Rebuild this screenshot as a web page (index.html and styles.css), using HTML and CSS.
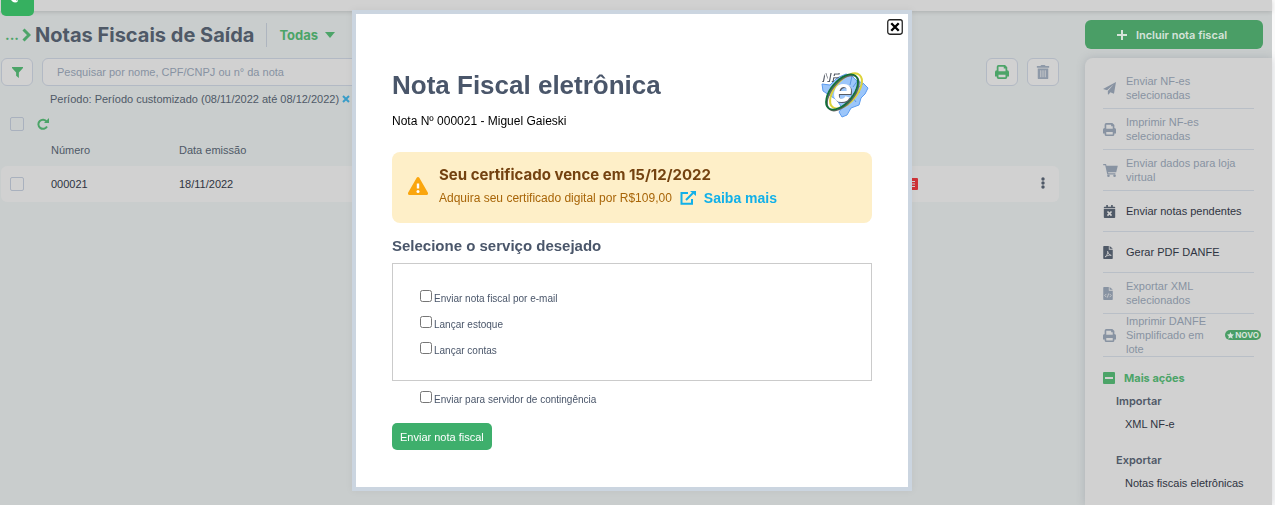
FILE: index.html
```html
<!DOCTYPE html>
<html lang="pt-BR">
<head>
    <meta charset="UTF-8">
    <meta name="viewport" content="width=device-width, initial-scale=1.0">
    <title>Notas Fiscais de Saída</title>
    <link rel="stylesheet" href="styles.css">
</head>
<body>
    <!-- shared icons -->
    <svg class="sprite" aria-hidden="true">
        <symbol id="icon-print" viewBox="0 0 16 16">
            <path fill-rule="evenodd" d="M2 6V2a2 2 0 0 1 2-2h7.500L14 2.500V6a2 2 0 0 1 2 2v5h-2v1a2 2 0 0 1-2 2H4a2 2 0 0 1-2-2v-1H0V8a2 2 0 0 1 2-2zM4 2v5h8V4h-2V2zM4 11v3h8v-3z"/>
        </symbol>
        <symbol id="icon-file" viewBox="0 0 12 16">
            <path d="M1 0h6v4.500h5V15a1 1 0 0 1-1 1H1a1 1 0 0 1-1-1V1a1 1 0 0 1 1-1z"/>
            <path d="M8 0l4 3.500H8z"/>
        </symbol>
    </svg>

    <header class="topbar">
        <a class="logo" href="#" aria-label="Início">
            <svg viewBox="0 0 33 16"><path d="M10 0h5q0 1 2 0v1q-1 1.500-3 1.500T10 0z" fill="#fff"/></svg>
        </a>
    </header>

    <div class="page">
        <main class="content">
            <div class="title-row">
                <a class="crumb" href="#">...</a>
                <svg class="chevron" viewBox="0 0 9 14"><path d="M1.500 1.500L7 7l-5.500 5.500" fill="none" stroke="#4ca468" stroke-width="3"/></svg>
                <h1>Notas Fiscais de Saída</h1>
                <button class="view" type="button">Todas <svg viewBox="0 0 10 6"><path d="M0 0h10L5 6z"/></svg></button>
            </div>

            <div class="tools">
                <button class="tool" type="button" aria-label="Filtrar">
                    <svg class="icon" viewBox="0 0 12 12"><path d="M0 0h12v1L7.500 6v6L4.500 9.500V6L0 1z"/></svg>
                </button>
                <input class="search" type="text" aria-label="Pesquisar" placeholder="Pesquisar por nome, CPF/CNPJ ou n° da nota">
                <div class="tool-actions">
                    <button class="tool" type="button" aria-label="Imprimir">
                        <svg class="icon icon-lg"><use href="#icon-print"/></svg>
                    </button>
                    <button class="tool tool-muted" type="button" aria-label="Excluir">
                        <svg class="icon icon-lg" viewBox="0 0 14 16"><path fill-rule="evenodd" d="M5 0h4l1 1h4v2H0V1h4zM1 4h12v11a1 1 0 0 1-1 1H2a1 1 0 0 1-1-1zM4 6v8h1V6zM6.500 6v8h1V6zM9 6v8h1V6z"/></svg>
                    </button>
                </div>
            </div>

            <div class="period">
                Período: Período customizado (08/11/2022 até 08/12/2022)
                <button type="button" aria-label="Remover período"><svg viewBox="0 0 8 8"><path d="M1 1l6 6M7 1L1 7" stroke="#3a9dc8" stroke-width="2"/></svg></button>
            </div>

            <div class="select-row">
                <input type="checkbox" class="check" aria-label="Selecionar todas">
                <button type="button" aria-label="Atualizar">
                    <svg viewBox="0 0 12 12"><path d="M9.700 3.500A4.600 4.600 0 1 0 10 8.500" fill="none" stroke="#4ca468" stroke-width="2"/><path d="M12 0v5H7z" fill="#4ca468"/></svg>
                </button>
            </div>

            <table class="notes">
                <thead>
                    <tr>
                        <th class="col-check"></th>
                        <th class="col-number">Número</th>
                        <th>Data emissão</th>
                        <th class="col-flag"></th>
                        <th class="col-menu"></th>
                    </tr>
                </thead>
                <tbody>
                    <tr>
                        <td><input type="checkbox" class="check" aria-label="Selecionar nota 000021"></td>
                        <td>000021</td>
                        <td>18/11/2022</td>
                        <td><svg class="flag" viewBox="0 0 11 12"><rect width="11" height="12" rx="1" fill="#cf3338"/><path d="M4 3.500h4M4 6h4M4 8.500h4" stroke="#d1d1d1"/></svg></td>
                        <td>
                            <button type="button" aria-label="Opções">
                                <svg viewBox="0 0 4 12"><circle cx="2" cy="2" r="1.700"/><circle cx="2" cy="6" r="1.700"/><circle cx="2" cy="10" r="1.700"/></svg>
                            </button>
                        </td>
                    </tr>
                </tbody>
            </table>
        </main>

        <aside class="sidebar">
            <button class="add" type="button">
                <svg viewBox="0 0 10 10"><path d="M5 0v10M0 5h10" stroke="#d6e3da" stroke-width="2"/></svg>
                Incluir nota fiscal
            </button>
            <nav class="card">
                <ul class="menu">
                    <li class="disabled">
                        <svg viewBox="0 0 16 16"><path d="M16 0l-2.500 14.500-4.500-2L7 15.500 6 15v-4l7-8-8 7L0 8.500z"/></svg>
                        <a href="#">Enviar NF-es selecionadas</a>
                    </li>
                    <li class="disabled">
                        <svg><use href="#icon-print"/></svg>
                        <a href="#">Imprimir NF-es selecionadas</a>
                    </li>
                    <li class="disabled">
                        <svg class="wide" viewBox="0 0 18 16"><path d="M0 0h3.500L4 2h14l-2 8H6l.3 1.500H15V13H5L2.500 1.500H0z"/><circle cx="6.500" cy="14.400" r="1.600"/><circle cx="14" cy="14.400" r="1.600"/></svg>
                        <a href="#">Enviar dados para loja virtual</a>
                    </li>
                    <li>
                        <svg viewBox="0 0 14 16"><path fill-rule="evenodd" d="M3 0h2v2h4V0h2v2h2a1 1 0 0 1 1 1v1H0V3a1 1 0 0 1 1-1h2zM0 5h14v10a1 1 0 0 1-1 1H1a1 1 0 0 1-1-1z"/><path d="M4.500 8l5 5M9.500 8l-5 5" stroke="#d1d1d1" stroke-width="2"/></svg>
                        <a href="#">Enviar notas pendentes</a>
                    </li>
                    <li>
                        <svg class="file" viewBox="0 0 12 16"><use href="#icon-file"/><path d="M2.500 13.500C5 11 6 9 5.500 6.500c1 3 2 4.500 4.500 5-3-.5-5 0-7.500 2z" fill="none" stroke="#d1d1d1"/></svg>
                        <a href="#">Gerar PDF DANFE</a>
                    </li>
                    <li class="disabled">
                        <svg class="file" viewBox="0 0 12 16"><use href="#icon-file"/><path d="M4 8.500L2 10.500l2 2M8 8.500l2 2-2 2M6.800 8l-1.600 5" fill="none" stroke="#d1d1d1"/></svg>
                        <a href="#">Exportar XML selecionados</a>
                    </li>
                    <li class="disabled">
                        <svg><use href="#icon-print"/></svg>
                        <a href="#" class="short">Imprimir DANFE Simplificado em lote</a>
                        <span class="badge"><svg viewBox="0 0 10 10"><path d="M5 0l1.500 3.300 3.500.4-2.600 2.400.7 3.600L5 8 1.900 9.700l.7-3.600L0 3.700l3.500-.4z"/></svg>NOVO</span>
                    </li>
                </ul>
                <button class="more" type="button">
                    <svg viewBox="0 0 12 12"><rect width="12" height="12" rx="1"/><path d="M2 6h8" stroke="#d1d1d1" stroke-width="2"/></svg>
                    Mais ações
                </button>
                <section class="group">
                    <h2>Importar</h2>
                    <a href="#">XML NF-e</a>
                </section>
                <section class="group">
                    <h2>Exportar</h2>
                    <a href="#">Notas fiscais eletrônicas</a>
                </section>
            </nav>
        </aside>
    </div>

    <div class="overlay">
        <div class="modal" role="dialog" aria-labelledby="modal-title">
            <button class="close" type="button" aria-label="Fechar">
                <svg viewBox="0 0 15 15"><rect x=".7" y=".7" width="13.600" height="13.600" rx="2" fill="#fff" stroke="#222" stroke-width="1.200"/><path d="M4 4l7 7M11 4l-7 7" stroke="#000" stroke-width="2.200"/></svg>
            </button>
            <div class="modal-head">
                <div>
                    <h2 id="modal-title">Nota Fiscal eletrônica</h2>
                    <p>Nota Nº 000021 - Miguel Gaieski</p>
                </div>
                <svg class="nfe" viewBox="0 0 48 48" role="img" aria-label="NF-e">
                    <path d="M1 14l8 1 7-7 9-4 6 2 5 5 6 2 5 5-3 6-4 4-2 7-8 3-4 7-5 2-3-5 3-4-5-8-8-5-6-4z" fill="#9cc6fa" stroke="#5c9cf0"/>
                    <path d="M31 6l-2 9M37 10l-5 7M42 14l-8 6M39 22l-7 2M35 32l-5-7M27 36l-3-5" stroke="#5b96e2" fill="none"/>
                    <ellipse cx="25" cy="21" rx="11" ry="21" transform="rotate(40 25 21)" fill="none" stroke="#ddd33a" stroke-width="2"/>
                    <ellipse cx="22" cy="23" rx="11" ry="21" transform="rotate(40 22 23)" fill="none" stroke="#666" stroke-width="1.500"/>
                    <ellipse cx="21" cy="22" rx="11" ry="21" transform="rotate(40 21 22)" fill="none" stroke="#12703a" stroke-width="1.800"/>
                    <text x="12" y="32" class="nfe-e">e</text>
                    <text x="0" y="11" class="nfe-nf">NF</text>
                </svg>
            </div>

            <div class="alert">
                <svg class="warning" viewBox="0 0 20 18"><path d="M8.700.8a1.500 1.500 0 0 1 2.600 0l8.500 14.800A1.500 1.500 0 0 1 18.500 18h-17A1.500 1.500 0 0 1 .2 15.600z" fill="#faa60f"/><path d="M10 6.500v5" stroke="#fff" stroke-width="2.400"/><circle cx="10" cy="14.500" r="1.500" fill="#fff"/></svg>
                <div>
                    <strong>Seu certificado vence em 15/12/2022</strong>
                    <p>Adquira seu certificado digital por R$109,00
                        <a href="#"><svg viewBox="0 0 16 14"><path d="M8 2H1.500v10.800H12V8" fill="none" stroke="#12b0e8" stroke-width="2"/><path d="M6 9l7-7" stroke="#12b0e8" stroke-width="2"/><path d="M10 0h6v5z" fill="#12b0e8"/></svg>Saiba mais</a>
                    </p>
                </div>
            </div>

            <form class="services">
                <h3>Selecione o serviço desejado</h3>
                <div class="options">
                    <label><input type="checkbox"> Enviar nota fiscal por e-mail</label>
                    <label><input type="checkbox"> Lançar estoque</label>
                    <label><input type="checkbox"> Lançar contas</label>
                </div>
                <label class="contingency"><input type="checkbox"> Enviar para servidor de contingência</label>
                <button class="send" type="button">Enviar nota fiscal</button>
            </form>
        </div>
    </div>
</body>
</html>
```
FILE: styles.css
```css
* {
    box-sizing: border-box;
}
body {
    font-family: "Liberation Sans", Arial, sans-serif;
    font-size: 11px;
    color: #2f3441;
    background-color: #fafafa;
    margin: 0;
    padding-right: 3px;
}
h1, h2, h3, p, ul {
    margin: 0;
    padding: 0;
}
button {
    font-family: inherit;
    background: none;
    border: none;
    padding: 0;
    cursor: pointer;
}
a {
    color: inherit;
    text-decoration: none;
}
svg {
    display: block;
    fill: currentColor;
    flex-shrink: 0;
}
.sprite {
    position: absolute;
    width: 0;
    height: 0;
}
.topbar {
    position: relative;
    height: 11px;
    background-color: #d1d1d1;
    box-shadow: 0 1px 4px rgba(0, 0, 0, 0.15);
}
.logo {
    position: absolute;
    left: 1px;
    top: 0;
    width: 33px;
    height: 16px;
    background-color: #36b060;
    border-radius: 0 0 5px 5px;
}
.page {
    display: grid;
    grid-template-columns: 1fr 187px;
    gap: 26px;
    min-height: calc(100vh - 11px);
    padding-left: 1px;
    background-color: #c9cdcd;
}

/* list */
.title-row {
    display: flex;
    align-items: center;
    height: 47px;
    font-family: Inter, sans-serif;
    color: #4ca468;
}
.crumb {
    padding-left: 4px;
    font-size: 14px;
    font-weight: 700;
}
.chevron {
    width: 9px;
    height: 14px;
    margin: 0 4px 0 3px;
}
.title-row h1 {
    font-size: 20px;
    font-weight: 700;
    color: #4f5967;
}
.view {
    display: flex;
    align-items: center;
    gap: 7px;
    height: 24px;
    margin-left: 12px;
    padding-left: 12px;
    border-left: 1px solid #aeb5bf;
    font-size: 13px;
    font-weight: 700;
    color: #4ca468;
}
.view svg {
    width: 10px;
    height: 6px;
}
.tools {
    display: flex;
    gap: 9px;
}
.tool {
    display: flex;
    align-items: center;
    justify-content: center;
    width: 32px;
    height: 28px;
    border: 1px solid #b2b9c4;
    border-radius: 6px;
    background-color: #d1d1d1;
    color: #4ca468;
}
.tool-muted {
    color: #8e99a8;
}
.icon {
    width: 11px;
    height: 11px;
}
.icon-lg {
    width: 14px;
    height: 14px;
}
.search {
    flex: 0 1 620px;
    height: 28px;
    padding: 0 14px;
    border: 1px solid #b2b9c4;
    border-radius: 6px;
    background-color: #d1d1d1;
    font-family: inherit;
    font-size: 11px;
}
.search::placeholder {
    color: #8792a2;
}
.tool-actions {
    display: flex;
    gap: 9px;
    margin-left: auto;
}
.period {
    display: flex;
    align-items: center;
    gap: 3px;
    height: 26px;
    padding-left: 49px;
    color: #4f5967;
}
.period svg {
    width: 8px;
    height: 8px;
}
.select-row {
    display: flex;
    align-items: center;
    gap: 13px;
    height: 24px;
    padding-left: 9px;
}
.select-row svg {
    width: 12px;
    height: 12px;
}
.check {
    appearance: none;
    display: block;
    width: 14px;
    height: 14px;
    margin: 0;
    border: 1px solid #a9b1be;
    border-radius: 2px;
}
.notes {
    width: 100%;
    table-layout: fixed;
    border-collapse: separate;
    border-spacing: 0;
}
.notes th {
    height: 30px;
    padding: 0 0 2px;
    font-weight: 400;
    text-align: left;
    color: #4f5967;
}
.notes td {
    height: 36px;
    padding: 0;
    background-color: #d1d1d1;
}
.notes td:first-child {
    padding-left: 9px;
    border-radius: 6px 0 0 6px;
}
.notes td:last-child {
    border-radius: 0 6px 6px 0;
}
.notes td button {
    color: #4f5967;
}
.notes td button svg {
    width: 4px;
    height: 12px;
}
.col-check {
    width: 50px;
}
.col-number {
    width: 128px;
}
.col-flag {
    width: 134px;
}
.col-menu {
    width: 18px;
}
.flag {
    width: 11px;
    height: 12px;
}

/* sidebar */
.sidebar {
    display: flex;
    flex-direction: column;
    gap: 9px;
    padding-top: 9px;
}
.add {
    display: flex;
    align-items: center;
    justify-content: center;
    gap: 9px;
    height: 29px;
    margin-right: 9px;
    padding-right: 4px;
    border-radius: 6px;
    background-color: #4a9e66;
    font-family: Inter, sans-serif;
    font-size: 11px;
    font-weight: 600;
    color: #d6e3da;
}
.add svg {
    width: 10px;
    height: 10px;
}
.card {
    flex: 1;
    padding: 10px 18px 0;
    border-radius: 8px 0 0 0;
    background-color: #d1d1d1;
    box-shadow: 0 0 8px rgba(90, 100, 120, 0.25);
}
.menu {
    list-style: none;
}
.menu li {
    position: relative;
    display: flex;
    align-items: center;
    gap: 10px;
    min-height: 41px;
    border-bottom: 1px solid #b9bfc7;
    line-height: 14px;
}
.menu li > svg {
    width: 13px;
    height: 13px;
    color: #4f5967;
}
.menu li > .wide {
    width: 15px;
    margin-right: -2px;
}
.menu li > .file {
    width: 10px;
    margin-right: 3px;
}
.menu .disabled,
.menu .disabled > svg {
    color: #8893a2;
}
.menu .short {
    width: 90px;
}
.badge {
    position: absolute;
    right: -7px;
    display: flex;
    align-items: center;
    gap: 1px;
    height: 10px;
    padding: 0 2px;
    border-radius: 5px;
    background-color: #4a9e66;
    font-family: Inter, sans-serif;
    font-size: 8px;
    font-weight: 700;
    color: #d6e3da;
}
.badge svg {
    width: 7px;
    height: 7px;
}
.more {
    display: flex;
    align-items: center;
    gap: 9px;
    height: 37px;
    padding-top: 4px;
    font-family: Inter, sans-serif;
    font-size: 11px;
    font-weight: 700;
    color: #4ca468;
}
.more svg {
    width: 12px;
    height: 12px;
}
.group {
    height: 59px;
    padding-left: 13px;
}
.group:last-child {
    height: auto;
}
.group h2 {
    font-family: Inter, sans-serif;
    font-size: 11px;
    font-weight: 600;
    line-height: 14px;
    color: #4f5967;
}
.group a {
    display: block;
    padding: 8px 0 0 9px;
    line-height: 16px;
}

/* modal */
.overlay {
    position: fixed;
    inset: 0;
    display: flex;
    justify-content: center;
    align-items: flex-start;
    padding: 10px 11px 0 0;
}
.modal {
    position: relative;
    width: 560px;
    padding: 56px 36px 37px;
    border: 4px solid #cbd5e0;
    background-color: #fff;
    box-shadow: 0 0 8px rgba(0, 0, 0, 0.05);
}
.close {
    position: absolute;
    top: 5px;
    right: 5px;
}
.close svg {
    width: 16px;
    height: 16px;
}
.modal-head {
    display: flex;
    justify-content: space-between;
}
.modal-head h2 {
    font-size: 26px;
    line-height: 30px;
    color: #4a566a;
}
.modal-head p {
    padding-top: 13px;
    font-size: 12px;
    line-height: 16px;
    color: #000;
}
.nfe {
    width: 48px;
    height: 48px;
    margin-right: 3px;
}
.nfe text {
    font-family: "Liberation Sans", Arial, sans-serif;
    font-style: italic;
    font-weight: 700;
    fill: #fff;
    filter: drop-shadow(1px 1px 0 #555b66);
}
.nfe-e {
    font-size: 34px;
}
.nfe-nf {
    font-size: 13px;
}
.alert {
    display: flex;
    align-items: center;
    gap: 11px;
    height: 71px;
    margin-top: 23px;
    padding: 0 16px 4px;
    border-radius: 8px;
    background-color: #feefc8;
    color: #a86508;
}
.alert strong {
    display: block;
    font-family: Inter, sans-serif;
    font-size: 15px;
    line-height: 24px;
    color: #744210;
}
.alert p {
    display: flex;
    align-items: center;
    gap: 8px;
    font-size: 12px;
    line-height: 22px;
}
.alert a {
    display: flex;
    align-items: center;
    gap: 8px;
    font-size: 14px;
    font-weight: 700;
    color: #12b0e8;
}
.alert a svg {
    width: 16px;
    height: 14px;
}
.warning {
    width: 20px;
    height: 18px;
}
.services {
    color: #4a566a;
}
.services h3 {
    padding-top: 12px;
    font-size: 15px;
    line-height: 22px;
}
.options {
    display: grid;
    gap: 10px;
    margin-top: 6px;
    padding: 25px 27px 23px;
    border: 1px solid #cbcbcb;
}
.services label {
    display: flex;
    align-items: flex-end;
    gap: 2px;
    height: 16px;
    font-size: 10px;
    line-height: 12px;
}
.services input {
    width: 12px;
    height: 12px;
    margin: 0 0 3px;
}
.services .contingency {
    margin: 9px 28px 0;
}
.send {
    height: 27px;
    margin-top: 17px;
    padding: 0 8px;
    border-radius: 5px;
    background-color: #3eaf6c;
    font-size: 11px;
    color: #fff;
}
```
